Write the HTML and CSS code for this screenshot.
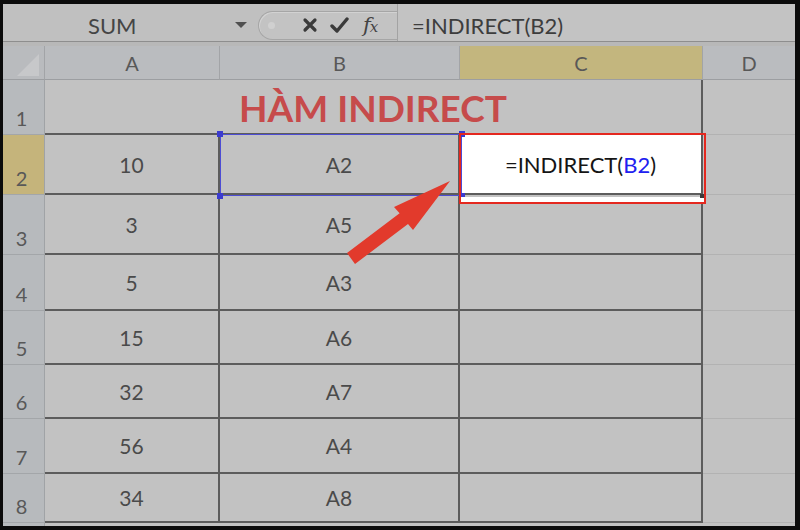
FILE: index.html
```html
<!DOCTYPE html>
<html>
<head>
<meta charset="utf-8">
<link rel="stylesheet" href="styles.css">
</head>
<body>
<div class="frame">
  <div class="app">
    <div class="fbar">
      <div class="namebox"><span class="name">SUM</span><span class="dd"></span></div>
      <div class="btns">
        <span class="dot"></span>
        <svg class="ico ico-x" width="16" height="16" viewBox="0 0 16 16"><path d="M3 3 L13 13 M13 3 L3 13" stroke="#3a3a3a" stroke-width="3.2" stroke-linecap="round"/></svg>
        <svg class="ico ico-ok" width="19" height="17" viewBox="0 0 19 17"><path d="M2 9 L7 14 L17 2" stroke="#3a3a3a" stroke-width="3.4" fill="none" stroke-linecap="round" stroke-linejoin="round"/></svg>
        <span class="fx">f<span class="fxx">x</span></span>
      </div>
      <div class="input">=INDIRECT(B2)</div>
    </div>
    <div class="sep"></div>
    <div class="grid">
      <div class="corner"><span class="tri"></span></div>
      <div class="ch">A</div>
      <div class="ch">B</div>
      <div class="ch ch-sel">C</div>
      <div class="ch ch-last">D</div>

      <div class="rh">1</div>
      <div class="c title">HÀM INDIRECT</div>
      <div class="d"></div>

      <div class="rh rh-sel">2</div>
      <div class="c">10</div>
      <div class="c">A2</div>
      <div class="c c2">=INDIRECT(<span class="ref">B2</span>)</div>
      <div class="d"></div>

      <div class="rh">3</div>
      <div class="c">3</div>
      <div class="c">A5</div>
      <div class="c"></div>
      <div class="d"></div>

      <div class="rh">4</div>
      <div class="c">5</div>
      <div class="c">A3</div>
      <div class="c"></div>
      <div class="d"></div>

      <div class="rh">5</div>
      <div class="c">15</div>
      <div class="c">A6</div>
      <div class="c"></div>
      <div class="d"></div>

      <div class="rh">6</div>
      <div class="c">32</div>
      <div class="c">A7</div>
      <div class="c"></div>
      <div class="d"></div>

      <div class="rh">7</div>
      <div class="c">56</div>
      <div class="c">A4</div>
      <div class="c"></div>
      <div class="d"></div>

      <div class="rh">8</div>
      <div class="c">34</div>
      <div class="c">A8</div>
      <div class="c"></div>
      <div class="d"></div>

      <div class="rh rh-tail"></div>
      <div class="tail"></div>
      <div class="tail"></div>
      <div class="tail"></div>
      <div class="tail"></div>
    </div>

    <div class="selection">
      <span class="h h-tl"></span><span class="h h-tr"></span><span class="h h-bl"></span><span class="h h-br"></span>
    </div>
    <div class="redbox"><span class="fill-handle"></span></div>
    <svg class="arrow" width="792" height="522" viewBox="0 0 792 522">
      <polygon points="344,249 396.6,209.3 391,203 447,177 410,226 405,220 352,260" fill="#e23a2c"/>
    </svg>
  </div>
</div>
</body>
</html>
```
FILE: styles.css
```css
* { box-sizing: border-box; }
html, body { margin: 0; padding: 0; background: #0b0b0b; }
body {
  width: 800px; height: 530px; overflow: hidden;
  font-family: Lato, "Open Sans", sans-serif;
}
.frame { padding: 4px 5px 4px 3px; height: 530px; }
.app {
  position: relative;
  width: 792px; height: 522px;
  background: #c1c1c1;
  display: grid;
  grid-template-rows: 37px 5px 480px;
  overflow: hidden;
}

/* formula bar */
.fbar { display: flex; align-items: center; padding-top: 5px; background: #c0c0c0; }
.namebox { width: 255px; height: 100%; display: flex; align-items: center; }
.name { margin-left: 85px; font-size: 22px; color: #454545; }
.dd {
  margin-left: auto; margin-right: 11px;
  width: 0; height: 0;
  border-left: 6px solid transparent; border-right: 6px solid transparent;
  border-top: 6px solid #505050;
}
.btns {
  width: 139px; height: 29px;
  display: flex; align-items: center;
  border: 1px solid #a6a6a6; border-right: none;
  border-radius: 15px 0 0 15px;
  background: #c3c3c3;
  box-shadow: inset 1px 1px 0 #d2d2d2;
}
.dot { width: 7px; height: 7px; border-radius: 50%; background: #d0d0d0; margin-left: 9px; }
.ico-x { margin-left: 27px; }
.ico-ok { margin-left: 12px; }
.fx {
  margin-left: 14px;
  font-family: "DejaVu Serif", "Liberation Serif", serif;
  font-style: italic; font-size: 21px; color: #444444;
  letter-spacing: -1px;
}
.fxx { font-size: 15px; }
.input {
  display: flex; align-items: center;
  flex: 1; height: calc(100% + 5px); margin-top: -5px;
  padding: 5px 0 0 14px;
  border-left: 1px solid #a3a3a3;
  background: #c3c3c3;
  font-size: 22px; color: #3d3d3d;
}
.sep { border-top: 1px solid #8e8e8e; background: #b8b8b8; }

/* grid */
.grid {
  display: grid;
  grid-template-columns: 42px 175px 240px 243px 92px;
  grid-template-rows: 34px 55px 60px 60px 56px 54px 54px 55px 49px 3px;
}
.corner {
  background: #b9bbbe;
  border-right: 1px solid #a2a4a7; border-bottom: 1px solid #9c9ea1;
  display: flex; align-items: flex-end; justify-content: flex-end;
  padding: 0 5px 3px 0;
}
.tri {
  width: 0; height: 0;
  border-left: 22px solid transparent;
  border-bottom: 22px solid #c7c8ca;
}
.ch {
  background: #babcbf;
  border-right: 1px solid #a2a4a7; border-bottom: 1px solid #9c9ea1;
  display: flex; align-items: center; justify-content: center;
  font-size: 20px; color: #585858;
}
.ch-sel { background: #c3b67e; }
.ch-last { border-right: none; }
.rh {
  background: #b7babd;
  border-right: 1px solid #a0a3a6; border-bottom: 1px solid #a3a6a9;
  display: flex; align-items: flex-end; justify-content: center;
  padding: 0 4px 4px 0;
  font-size: 20px; color: #585858;
}
.rh-sel { background: #c5b47b; }
.c {
  background: #c2c2c2;
  border-right: 2px solid #5c5c5c; border-bottom: 2px solid #5c5c5c;
  display: flex; align-items: center; justify-content: center;
  font-size: 21px; color: #4a4a4a;
}
.title {
  grid-column: span 3;
  align-items: flex-end; padding-bottom: 3px;
  font-size: 37px; font-weight: bold; color: #c64b4b;
}
.c2 { background: #ffffff; color: #151515; font-size: 22px; }
.ref { color: #2020f0; }
.d { background: #c2c2c2; border-bottom: 1px solid #b2b2b2; }
.tail { background: #c2c2c2; }

/* overlays */
.selection {
  position: absolute; left: 217px; top: 130px; width: 242px; height: 62px;
  border: 1px solid #4d4dd4;
}
.h { position: absolute; width: 6px; height: 6px; background: #3b3bd0; }
.h-tl { left: -4px; top: -4px; }
.h-tr { right: -4px; top: -4px; }
.h-bl { left: -4px; bottom: -4px; }
.h-br { right: -4px; bottom: -4px; }
.redbox {
  position: absolute; left: 456px; top: 129px; width: 247px; height: 71px;
  border: 2px solid #e4281f;
  background: linear-gradient(to bottom, transparent 0, transparent 62px, #ffffff 62px);
}
.fill-handle {
  position: absolute; right: 0; top: 59px; width: 4px; height: 4px; background: #3a3a3a;
}
.arrow { position: absolute; left: 0; top: 0; pointer-events: none; }
```
